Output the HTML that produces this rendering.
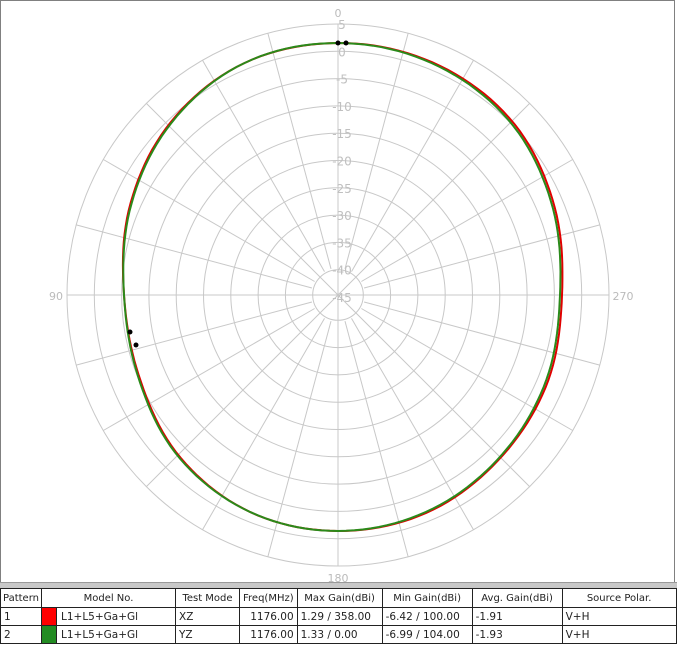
<!DOCTYPE html><html><head><style>
body{margin:0;width:677px;height:645px;background:#fff;overflow:hidden;font-family:"DejaVu Sans","Liberation Sans",sans-serif;}
#plot{position:absolute;left:0;top:0;width:675px;height:582px;border:1px solid #808080;border-bottom:none;box-sizing:border-box;background:#fff}
#bar{position:absolute;left:0;top:582px;width:677px;height:5px;background:#c8c8c8;border-top:1px solid #999}
table{position:absolute;left:0;top:588px;border-collapse:collapse;font-size:10.5px;color:#222}
td{border:1px solid #222;height:17px;padding:0 3px;white-space:nowrap}
.h td{text-align:center;height:18px;font-size:10px}
.r{text-align:right}
</style></head><body>
<div id="plot"><svg id="s" width="675" height="582"></svg></div>
<div id="bar"></div>
<table>
<tr class="h"><td style="width:36px;padding:0 2px">Pattern</td><td colspan="2" style="width:127px">Model No.</td><td style="width:57px">Test Mode</td><td style="width:50px">Freq(MHz)</td><td style="width:78px">Max Gain(dBi)</td><td style="width:83px">Min Gain(dBi)</td><td style="width:83px">Avg. Gain(dBi)</td><td style="width:107px">Source Polar.</td></tr>
<tr><td style="padding:0 0 0 3px;width:15px;border-right:none">1</td><td style="background:#f00;width:14px;padding:0"></td><td style="padding-left:4px">L1+L5+Ga+Gl</td><td>XZ</td><td class="r">1176.00</td><td>1.29 / 358.00</td><td>-6.42 / 100.00</td><td>-1.91</td><td>V+H</td></tr>
<tr><td style="padding:0 0 0 3px;border-right:none">2</td><td style="background:#228b22;padding:0"></td><td style="padding-left:4px">L1+L5+Ga+Gl</td><td>YZ</td><td class="r">1176.00</td><td>1.33 / 0.00</td><td>-6.99 / 104.00</td><td>-1.93</td><td>V+H</td></tr>
</table>
<script>
var s=document.getElementById('s'),cx=337,cy=294,h='';
for(var i=0;i<10;i++){var r=271-27.3*i;h+='<circle cx="'+cx+'" cy="'+cy+'" r="'+r+'" fill="none" stroke="#c8c8c8"/>';}
for(var a=0;a<360;a+=15){var t=a*Math.PI/180,r0=(a%45==0)?0:27;
h+='<line x1="'+(cx+r0*Math.sin(t))+'" y1="'+(cy-r0*Math.cos(t))+'" x2="'+(cx+271*Math.sin(t))+'" y2="'+(cy-271*Math.cos(t))+'" stroke="#c8c8c8"/>';}
for(var i=0;i<11;i++){var v=5-5*i;h+='<text x="'+(cx+4)+'" y="'+(cy-271+27.3*i+5)+'" font-size="12" fill="#c0c0c0" text-anchor="middle" font-family="DejaVu Sans">'+v+'</text>';}
h+='<text x="'+cx+'" y="16" font-size="11" fill="#bbb" text-anchor="middle">0</text>';
h+='<text x="'+cx+'" y="581" font-size="11" fill="#bbb" text-anchor="middle">180</text>';
h+='<text x="55" y="299" font-size="11" fill="#bbb" text-anchor="middle">90</text>';
h+='<text x="622" y="299" font-size="11" fill="#bbb" text-anchor="middle">270</text>';
var gv=[252,250,244,232,222,225,229,234,236,234,227,216,214,225,239,250,252];
var rv=[252,251,246,234,224,227,230,235,236,234,226,215,214,226,240,250,252];
function mk(v){var P=[];for(var k=0;k<v.length;k++)P.push([k*22.5,v[k]]);return P;}
function interp(P,a){for(var k=0;k<P.length-1;k++)if(a<=P[k+1][0]){var n=P.length-1,p0=P[k>0?k-1:n-1][1],p1=P[k][1],p2=P[k+1][1],p3=P[k+2<=n?k+2:1][1],u=(a-P[k][0])/22.5;
return 0.5*((2*p1)+(-p0+p2)*u+(2*p0-5*p1+4*p2-p3)*u*u+(-p0+3*p1-3*p2+p3)*u*u*u);}}
function path(P,c){var d='';for(var a=0;a<=360;a+=2){var r=interp(P,a),t=a*Math.PI/180;d+=(a?'L':'M')+(cx+r*Math.sin(t)).toFixed(1)+' '+(cy-r*Math.cos(t)).toFixed(1);}
return '<path d="'+d+'Z" fill="none" stroke="'+c+'" stroke-width="2"/>';}
h+=path(mk(rv),'#e00000')+path(mk(gv),'#2a8a1a');
h+='<circle cx="337" cy="42" r="2.5"/><circle cx="345" cy="42" r="2.5"/><circle cx="129" cy="331" r="2.5"/><circle cx="135" cy="344" r="2.5"/>';
s.innerHTML=h;
</script>
</body></html>
